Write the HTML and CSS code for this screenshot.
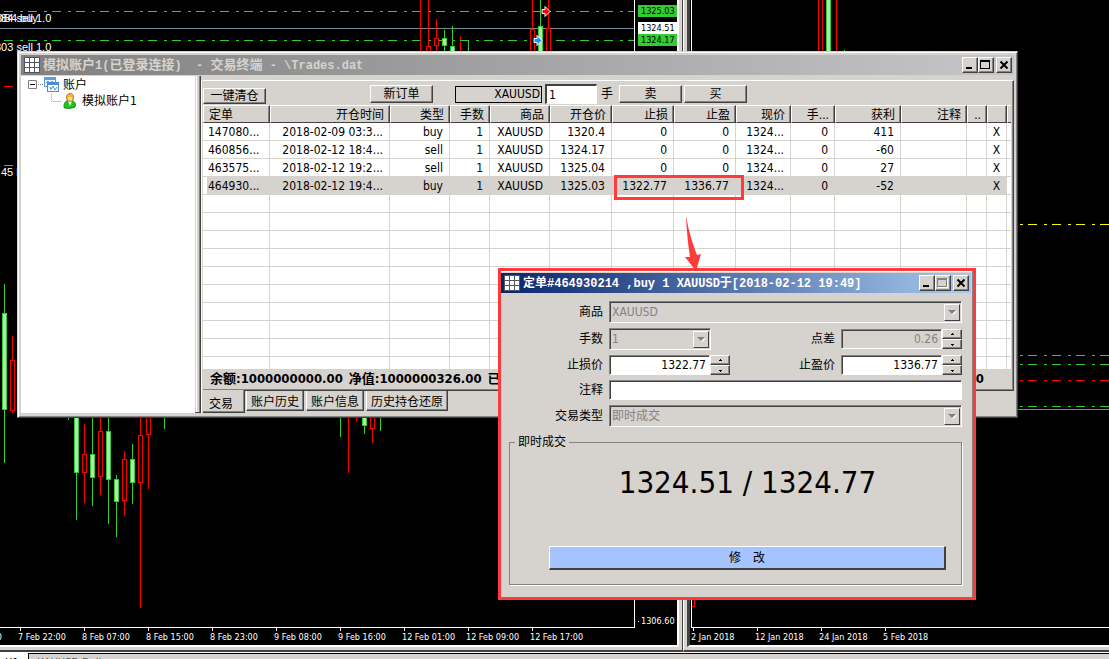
FILE: index.html
```html
<!DOCTYPE html>
<html lang="zh-CN">
<head>
<meta charset="utf-8">
<title>交易终端 - \Trades.dat</title>
<link rel="stylesheet" href="styles.css">
</head>
<body>
<main class="workspace">
  <section class="pane pane-main" aria-label="XAUUSD,H1">
    <div class="pane-inner">
      <div class="plot-row">
        <svg class="plot" aria-hidden="true">
          <g class="levels">
            <path class="level buy" d="M4 11.5H3000M4 40.5H3000"/>
            <path class="level buy" d="M4 165.5h9"/>
            <path class="level stop" d="M4 86.5h9"/>
            <path class="bid" d="M0 28.5H3000"/>
          </g>
          <path class="wick down" d="M420.5 0V55M428.5 0V46M436.5 19V38M436.5 46V55M460.5 36V55M532.5 0V29M548.5 0V28M12.5 336V360M12.5 411V413M84.5 424V454M84.5 472V503M100.5 410V431M100.5 476V495M124.5 451V459M124.5 500V516M140.5 410V435M140.5 482V608M148.5 434V489M348.5 410V473M356.5 410V421M372.5 428V443"/>
          <path class="wick up" d="M444.5 30V52M452.5 26V46M460 40.5H468.5V55M540.5 0V26M4.5 284V463M68.5 410V420M76.5 472V520M92.5 410V506M108.5 410V524M116.5 475V537M132.5 444V504M164.5 410V429M340.5 410V437M364.5 425V434M380.5 410V431"/>
          <path class="body down" d="M426.5 46.5h4v12h-4zM434.5 38.5h4v7h-4zM530.5 29.5h4v26h-4zM546.5 28.5h4v26h-4zM10.5 360.5h4v50h-4zM82.5 454.5h4v18h-4zM98.5 431.5h4v45h-4zM122.5 459.5h4v41h-4zM138.5 435.5h4v47h-4zM146.5 400.5h4v34h-4zM370.5 400.5h4v28h-4z"/>
          <path class="body up" d="M442.5 38.5h4v7h-4zM450.5 46.5h4v12h-4zM538.5 26.5h4v26h-4zM2.5 313.5h4v96h-4zM74.5 400.5h4v72h-4zM90.5 454.5h4v23h-4zM106.5 431.5h4v48h-4zM114.5 479.5h4v22h-4zM130.5 459.5h4v23h-4zM362.5 400.5h4v25h-4z"/>
          <path class="mark mark-sell" d="M542 9.500h3v-3l5 5-5 5v-3h-3z"/>
          <path class="mark mark-buy" d="M534 38.500h3v-3l5 5-5 5v-3h-3z"/>
          <g class="trade-labels">
            <text x="-5" y="22">084 sell 1.0</text>
            <text x="-5" y="22">OB4 buy</text>
            <text x="-5" y="51">303 sell 1.0</text>
            <text x="1" y="176">45 buy 1.0</text>
          </g>
        </svg>
        <div class="price-axis">
          <span class="tag tag-buy">1325.03</span>
          <span class="tag tag-bid">1324.51</span>
          <span class="tag tag-buy tag-next">1324.17</span>
          <span class="price-tick">1306.60</span>
        </div>
      </div>
      <div class="time-axis time-main">
        <span>7 Feb 14:00</span><span>7 Feb 22:00</span><span>8 Feb 07:00</span><span>8 Feb 15:00</span><span>8 Feb 23:00</span><span>9 Feb 08:00</span><span>9 Feb 16:00</span><span>12 Feb 01:00</span><span>12 Feb 09:00</span><span>12 Feb 17:00</span>
      </div>
    </div>
  </section>
  <section class="pane pane-side" aria-label="XAUUSD,Daily">
    <div class="pane-inner">
      <div class="plot-row">
        <svg class="plot" aria-hidden="true">
          <path class="level pending" d="M0 224.500H3000"/>
          <path class="level buy" d="M0 355.500H3000M0 364.500H3000M0 406.500H3000"/>
          <path class="level stop" d="M0 380.500H3000"/>
          <path class="bid" d="M0 409.500H3000"/>
          <path class="wick down" d="M126.500 0V55M130.500 0V55M144.500 0V55M0 606.500H2.500V590"/>
          <path class="wick up" d="M152.500 50V55"/>
          <path class="body up" d="M134.500 -5.500h4v62h-4z"/>
        </svg>
      </div>
      <div class="time-axis time-side">
        <span>2 Jan 2018</span><span>12 Jan 2018</span><span>24 Jan 2018</span><span>5 Feb 2018</span>
      </div>
    </div>
  </section>
</main>
<nav class="chart-tabs"><a class="chart-tab current" href="#h1">H1</a><a class="chart-tab" href="#daily">XAUUSD,Daily</a></nav>

<section class="window terminal" aria-label="交易终端">
  <header class="titlebar inactive">
    <svg class="app-icon" viewBox="0 0 16 16" aria-hidden="true"><path fill="#4c5866" d="M0 0h16v16H0z"/><path fill="#fff" d="M1 1h4v4H1zM6 1h4v4H6zM11 1h4v4h-4zM1 6h4v4H1zM6 6h4v4H6zM11 6h4v4h-4zM1 11h4v4H1zM6 11h4v4H6zM11 11h4v4h-4z"/></svg>
    <h1 class="title">模拟账户<span class="mono">1(</span>已登录连接<span class="mono">)  - </span>交易终端<span class="mono"> - \Trades.dat</span></h1>
    <div class="caption-buttons">
      <button class="caption" aria-label="最小化"><svg viewBox="0 0 14 14"><path d="M3 9h6v2H3z"/></svg></button>
      <button class="caption" aria-label="最大化"><svg viewBox="0 0 14 14"><path d="M1 2h10v9H1zM2 4v6h8V4z" fill-rule="evenodd"/></svg></button>
      <button class="caption close" aria-label="关闭"><svg viewBox="0 0 14 14"><path d="M3.500 3.500l7 7M10.500 3.500l-7 7"/></svg></button>
    </div>
  </header>
  <div class="terminal-body">
    <ul class="tree">
      <li class="tree-row">
        <svg class="expander" viewBox="0 0 15 9" aria-hidden="true"><path fill="none" stroke="#808080" d="M.5.5h8v8h-8z"/><path stroke="#000" d="M2 4.500h5"/><path stroke="#808080" stroke-dasharray="1 1" d="M10 4.500h5"/></svg>
        <svg class="tree-icon" viewBox="0 0 16 16" aria-hidden="true"><path fill="#5b9fe0" d="M1 0h12v10H1z"/><path fill="#e4f1ff" d="M2 3h10v6H2z"/><path fill="none" stroke="#5b9fe0" d="M3 6l2-2 2 3 2-3 2 2"/><path fill="#4a90d9" d="M4 5h12v10H4z"/><path fill="#fff" d="M5 8h10v6H5z"/><path fill="none" stroke="#4a90d9" d="M7 10l1 2.500L10 9l2 4 2-3"/></svg>
        <span>账户</span>
      </li>
      <li class="tree-row child">
        <svg class="branch" viewBox="0 0 12 16" aria-hidden="true"><path fill="none" stroke="#808080" stroke-dasharray="1 1" d="M.5 0V8.500H12"/></svg>
        <svg class="tree-icon" viewBox="0 0 16 16" aria-hidden="true"><path fill="#1fc41f" stroke="#128a12" d="M2.500 15C1 12 3 8 6 7.500h3C13 8 14 11 13 14c-3 1.500-8 1.500-10.500 1z"/><path fill="#fff" d="M6 8h4l-2 5z"/><path fill="#f0b63a" stroke="#b8801c" d="M8 .5c5 0 4.500 8 0 8s-5-8 0-8z"/><path fill="#ffdf8c" d="M6 4h4v2c0 2-4 2-4 0z"/></svg>
        <span>模拟账户1</span>
      </li>
    </ul>
    <div class="splitter"></div>
    <div class="trade-panel">
      <div class="sheet">
        <div class="toolbar">
          <button class="btn close-all">一键清仓</button>
          <button class="btn new-order">新订单</button>
          <input class="symbol" aria-label="商品" value="XAUUSD" readonly>
          <input class="lots" id="lots" value="1">
          <label for="lots">手</label>
          <button class="btn sell">卖</button>
          <button class="btn">买</button>
        </div>
        <table class="orders">
          <colgroup><col class="c67"><col class="c120"><col class="c60"><col class="c40"><col class="c60"><col class="c62"><col class="c62"><col class="c62"><col class="c55"><col class="c44"><col class="c66"><col class="c66"><col class="c20"><col class="c20"><col></colgroup>
          <thead><tr><th class="first">定单</th><th>开仓时间</th><th>类型</th><th>手数</th><th>商品</th><th>开仓价</th><th>止损</th><th>止盈</th><th>现价</th><th>手...</th><th>获利</th><th>注释</th><th>..</th><th></th><th></th></tr></thead>
          <tbody>
            <tr><td>147080...</td><td>2018-02-09 03:3...</td><td>buy</td><td>1</td><td>XAUUSD</td><td>1320.4</td><td>0</td><td>0</td><td>1324...</td><td>0</td><td>411</td><td></td><td></td><td>X</td><td></td></tr>
            <tr><td>460856...</td><td>2018-02-12 18:4...</td><td>sell</td><td>1</td><td>XAUUSD</td><td>1324.17</td><td>0</td><td>0</td><td>1324...</td><td>0</td><td>-60</td><td></td><td></td><td>X</td><td></td></tr>
            <tr><td>463575...</td><td>2018-02-12 19:2...</td><td>sell</td><td>1</td><td>XAUUSD</td><td>1325.04</td><td>0</td><td>0</td><td>1324...</td><td>0</td><td>27</td><td></td><td></td><td>X</td><td></td></tr>
            <tr class="selected"><td>464930...</td><td>2018-02-12 19:4...</td><td>buy</td><td>1</td><td>XAUUSD</td><td>1325.03</td><td>1322.77</td><td>1336.77</td><td>1324...</td><td>0</td><td>-52</td><td></td><td></td><td>X</td><td></td></tr>
            <tr><td></td><td></td><td></td><td></td><td></td><td></td><td></td><td></td><td></td><td></td><td></td><td></td><td></td><td></td><td></td></tr>
            <tr><td></td><td></td><td></td><td></td><td></td><td></td><td></td><td></td><td></td><td></td><td></td><td></td><td></td><td></td><td></td></tr>
            <tr><td></td><td></td><td></td><td></td><td></td><td></td><td></td><td></td><td></td><td></td><td></td><td></td><td></td><td></td><td></td></tr>
            <tr><td></td><td></td><td></td><td></td><td></td><td></td><td></td><td></td><td></td><td></td><td></td><td></td><td></td><td></td><td></td></tr>
            <tr><td></td><td></td><td></td><td></td><td></td><td></td><td></td><td></td><td></td><td></td><td></td><td></td><td></td><td></td><td></td></tr>
            <tr><td></td><td></td><td></td><td></td><td></td><td></td><td></td><td></td><td></td><td></td><td></td><td></td><td></td><td></td><td></td></tr>
            <tr><td></td><td></td><td></td><td></td><td></td><td></td><td></td><td></td><td></td><td></td><td></td><td></td><td></td><td></td><td></td></tr>
            <tr><td></td><td></td><td></td><td></td><td></td><td></td><td></td><td></td><td></td><td></td><td></td><td></td><td></td><td></td><td></td></tr>
            <tr><td></td><td></td><td></td><td></td><td></td><td></td><td></td><td></td><td></td><td></td><td></td><td></td><td></td><td></td><td></td></tr>
            <tr class="partial"><td></td><td></td><td></td><td></td><td></td><td></td><td></td><td></td><td></td><td></td><td></td><td></td><td></td><td></td><td></td></tr>
          </tbody>
        </table>
        <div class="summary"><span>余额:1000000000.00</span><span>净值:1000000326.00</span><span>已用预付款:5300.00</span><span class="profit">盈亏:326.00</span></div>
      </div>
      <div class="tabs" role="tablist">
        <button class="tab current-tab" role="tab" aria-selected="true">交易</button>
        <button class="tab" role="tab">账户历史</button>
        <button class="tab" role="tab">账户信息</button>
        <button class="tab" role="tab">历史持仓还原</button>
      </div>
    </div>
  </div>
</section>

<div class="highlight"></div>

<section class="dialog" role="dialog" aria-label="定单#464930214">
  <header class="titlebar active">
    <svg class="app-icon" viewBox="0 0 16 16" aria-hidden="true"><path fill="#4c5866" d="M0 0h16v16H0z"/><path fill="#fff" d="M1 1h4v4H1zM6 1h4v4H6zM11 1h4v4h-4zM1 6h4v4H1zM6 6h4v4H6zM11 6h4v4h-4zM1 11h4v4H1zM6 11h4v4H6zM11 11h4v4h-4z"/></svg>
    <h2 class="title">定单<span class="mono">#464930214 ,buy 1 XAUUSD</span>于<span class="mono">[2018-02-12 19:49]</span></h2>
    <div class="caption-buttons">
      <button class="caption" aria-label="最小化"><svg viewBox="0 0 14 14"><path d="M3 9h6v2H3z"/></svg></button>
      <button class="caption" aria-label="最大化" disabled><svg viewBox="0 0 14 14"><path fill="#fff" d="M2 3h10v9H2z"/><path fill="#808080" d="M1 2h10v9H1z"/><path fill="#d6d3ce" d="M2 4h8v6H2z"/></svg></button>
      <button class="caption close" aria-label="关闭"><svg viewBox="0 0 14 14"><path d="M3.500 3.500l7 7M10.500 3.500l-7 7"/></svg></button>
    </div>
  </header>
  <form class="order-form">
    <div class="row">
      <label for="f-symbol">商品</label>
      <span class="combo wide"><select id="f-symbol" disabled><option>XAUUSD</option></select><svg class="drop" viewBox="0 0 14 15" aria-hidden="true"><path fill="#fff" d="M4 6h8l-4 4z"/><path fill="#808080" d="M3 5h8l-4 4z"/></svg></span>
    </div>
    <div class="row">
      <label for="f-lots">手数</label>
      <span class="combo short"><select id="f-lots" disabled><option>1</option></select><svg class="drop" viewBox="0 0 14 15" aria-hidden="true"><path fill="#fff" d="M4 6h8l-4 4z"/><path fill="#808080" d="M3 5h8l-4 4z"/></svg></span>
      <label class="second" for="f-spread">点差</label>
      <input class="num" id="f-spread" value="0.26" disabled>
      <span class="spin"><button type="button" aria-label="增加点差"><svg viewBox="0 0 5 3"><path d="M2 0h1v1h1v1H1V1h1z"/></svg></button><button type="button" aria-label="减少点差"><svg viewBox="0 0 5 3"><path d="M1 1h3v1H3v1H2V2H1z"/></svg></button></span>
    </div>
    <div class="row">
      <label for="f-sl">止损价</label>
      <input class="num" id="f-sl" value="1322.77">
      <span class="spin"><button type="button" aria-label="增加止损价"><svg viewBox="0 0 5 3"><path d="M2 0h1v1h1v1H1V1h1z"/></svg></button><button type="button" aria-label="减少止损价"><svg viewBox="0 0 5 3"><path d="M1 1h3v1H3v1H2V2H1z"/></svg></button></span>
      <label class="second" for="f-tp">止盈价</label>
      <input class="num" id="f-tp" value="1336.77">
      <span class="spin"><button type="button" aria-label="增加止盈价"><svg viewBox="0 0 5 3"><path d="M2 0h1v1h1v1H1V1h1z"/></svg></button><button type="button" aria-label="减少止盈价"><svg viewBox="0 0 5 3"><path d="M1 1h3v1H3v1H2V2H1z"/></svg></button></span>
    </div>
    <div class="row">
      <label for="f-note">注释</label>
      <input class="wide" id="f-note">
    </div>
    <div class="row">
      <label for="f-type">交易类型</label>
      <span class="combo wide"><select id="f-type" disabled><option>即时成交</option></select><svg class="drop" viewBox="0 0 14 15" aria-hidden="true"><path fill="#fff" d="M4 6h8l-4 4z"/><path fill="#808080" d="M3 5h8l-4 4z"/></svg></span>
    </div>
    <fieldset class="instant">
      <legend>即时成交</legend>
      <output class="quote">1324.51 / 1324.77</output>
      <button class="modify" type="button">修　改</button>
    </fieldset>
  </form>
</section>
<svg class="pointer" viewBox="0 0 18 56" aria-hidden="true"><path fill="#ff3b3b" d="M2 0Q6 22 13 39L17 38 12 55 1 41 6 41Q3 22 2 0z"/></svg>
</body>
</html>
```
FILE: styles.css
```css
:root {
  --face: #d6d3ce;
  --shade: #848284;
  --dark: #424142;
  --lime: #32cd32;
  --red: #ff3b3b;
  --ui: "DejaVu Sans Condensed", "DejaVu Sans", "Noto Sans CJK SC", sans-serif;
}

* { box-sizing: border-box; }

body {
  margin: 0;
  height: 100vh;
  display: flex;
  flex-direction: column;
  overflow: hidden;
  position: relative;
  background: #000;
  color: #000;
  font: 12px/16px var(--ui);
}

button, input, select { font: inherit; color: inherit; border-radius: 0; margin: 0; }
button { padding: 0; }

/* charts */
.workspace { flex: 1; min-height: 0; display: flex; }
.pane {
  min-width: 0;
  display: flex;
  background: var(--face);
  border-bottom: 2px solid var(--dark);
  padding-bottom: 3px;
}
.pane-main { flex: 684 1 0; padding-right: 3px; border-right: 1px solid var(--dark); }
.pane-side { flex: 425 1 0; padding-left: 3px; border-left: 1px solid #fff; }
.pane-inner {
  flex: 1;
  min-width: 0;
  display: flex;
  flex-direction: column;
  background: #000;
  color: #fff;
  border-bottom: 2px solid #fff;
}
.pane-main .pane-inner { border-right: 2px solid #fff; }
.pane-side .pane-inner { border-left: 3px solid var(--dark); padding-left: 1px; }
.plot-row { flex: 1; min-height: 0; display: flex; border-bottom: 1px solid #fff; }
.pane-side .plot-row { border-left: 1px solid #fff; }
.plot { flex: 1; min-width: 0; width: 100%; height: 100%; display: block; shape-rendering: crispEdges; }
.pane-main .plot-row { margin-right: 42px; position: relative; border-right: 1px solid #fff; }
.price-axis {
  position: absolute;
  left: 100%;
  top: 0;
  bottom: 0;
  width: 43px;
  padding-left: 4px;
  padding-top: 5px;
  display: flex;
  flex-direction: column;
  font-size: 9px;
  line-height: 12px;
}
.tag { width: 39px; padding-left: 3px; margin-bottom: 5px; color: #000; }
.tag-buy { background: var(--lime); }
.tag-bid { background: #fff; margin-bottom: 0; }
.price-tick { margin-top: auto; padding-left: 3px; background: linear-gradient(#fff, #fff) 0 6px / 1px 1px no-repeat; }
.level { fill: none; stroke-dasharray: 9 7 3 5; }
.buy { stroke: var(--lime); }
.stop { stroke: #f00; }
.pending { stroke: #ff0; }
.bid { stroke: #778899; }
.wick { fill: none; }
.down { stroke: #f00; }
.up { stroke: var(--lime); }
.body.down { fill: #000; }
.body.up { fill: #b5e3b5; }
.mark { stroke: #fff; shape-rendering: auto; }
.mark-sell { fill: #f00; }
.mark-buy { fill: #1e90ff; }
.trade-labels { fill: #fff; font: 11px "Liberation Sans", sans-serif; }
.time-axis { display: flex; height: 17px; overflow: hidden; font-size: 9px; line-height: 12px; white-space: nowrap; }
.time-axis span { flex: 0 0 64px; padding-top: 3px; background: linear-gradient(#fff, #fff) 2px 0 / 1px 3px no-repeat; }
.time-main span:first-child { margin-left: -46px; }
.chart-tabs { height: 7px; flex: none; display: flex; overflow: hidden; background: var(--face); border-top: 1px solid #fff; }
.chart-tab { flex: 1; padding: 2px 0 0 8px; color: #555; text-decoration: none; font-size: 11px; line-height: 14px; border-top: 1px solid #000; border-left: 1px solid #000; }
.chart-tab.current { flex: 0 0 28px; padding-left: 4px; background: #fff; color: #000; border-color: #fff; }

/* windows */
.window {
  position: absolute;
  background: var(--face);
  border: 1px solid var(--face);
  border-right-color: var(--dark);
  border-bottom-color: var(--dark);
  box-shadow: inset 1px 1px #fff, inset -1px -1px var(--shade);
  padding: 3px;
}
.terminal { left: 17px; right: 91px; top: 51px; }
.titlebar { display: flex; align-items: center; height: 20px; padding: 0 2px 0 3px; gap: 3px; }
.titlebar.inactive { background: linear-gradient(90deg, #808080, #c6c5c9); color: var(--face); }
.titlebar.active { background: linear-gradient(90deg, #0a246a, #a6caf0); color: #fff; }
.app-icon { width: 16px; height: 16px; flex: none; }
.title { flex: 1; min-width: 0; margin: 0; font: bold 13px/20px "Noto Sans CJK SC", sans-serif; white-space: pre; overflow: hidden; }
.active .title { font-size: 12px; }
.mono { font: bold 12px/20px "Liberation Mono", monospace; }
.caption-buttons { display: flex; }
.caption, .btn, .spin button {
  background: var(--face);
  border: 1px solid #fff;
  border-right-color: var(--dark);
  border-bottom-color: var(--dark);
  box-shadow: inset -1px -1px var(--shade);
}
.caption { width: 16px; height: 16px; }
.caption svg { display: block; width: 14px; height: 14px; shape-rendering: crispEdges; }
.caption.close { margin-left: 2px; }
.caption.close svg { stroke: #000; stroke-width: 2; shape-rendering: auto; }

.terminal-body { display: flex; padding: 1px 0; }
.tree { width: 174px; margin: 0; padding: 0 0 0 7px; background: #fff; list-style: none; }
.tree-row { display: flex; align-items: center; height: 17px; }
.expander { width: 15px; height: 9px; }
.tree-icon { width: 16px; height: 16px; margin-right: 4px; }
.child { height: 16px; padding-left: 23px; }
.branch { width: 11px; height: 16px; }
.splitter { width: 6px; border: solid; border-width: 0 1px 1px 0; border-color: var(--dark); background: linear-gradient(90deg, var(--face) 1px, #fff 1px 2px, var(--face) 2px 4px, var(--shade) 4px); }
.trade-panel { flex: 1; min-width: 0; margin-top: 4px; border-left: 1px solid #fff; padding-left: 1px; }
.sheet { border-top: 1px solid #fff; border-right: 1px solid var(--dark); border-bottom: 1px solid var(--dark); box-shadow: inset -1px -1px var(--shade); padding-right: 2px; }
.toolbar { display: flex; align-items: center; height: 24px; padding-top: 2px; }
.btn { width: 63px; height: 18px; line-height: 16px; }
.close-all { height: 16px; line-height: 14px; align-self: flex-end; margin: 0 104px 1px 0; }
.symbol { width: 87px; height: 17px; margin: 0 3px 0 22px; padding: 0 1px; border: 1px solid #000; background: var(--face); text-align: right; }
.lots { width: 52px; height: 20px; margin-right: 4px; padding: 0 2px; border: 1px solid #fff; border-top: 2px solid var(--dark); border-left: 2px solid var(--dark); background: #fff; }
.sell { margin: 0 2px 0 6px; }

.orders { width: 100%; table-layout: fixed; border-collapse: separate; border-spacing: 0; }
.c67 { width: 67px; } .c120 { width: 120px; } .c60 { width: 60px; } .c40 { width: 40px; } .c62 { width: 62px; }
.c55 { width: 55px; } .c44 { width: 44px; } .c66 { width: 66px; } .c20 { width: 20px; }
.orders th, .orders td { height: 18px; padding: 0 6px 0 0; text-align: right; line-height: 16px; white-space: nowrap; overflow: hidden; }
.orders th { font-weight: normal; line-height: 14px; border: 1px solid #fff; border-right-color: var(--dark); border-bottom-color: var(--dark); box-shadow: inset -1px 0 var(--shade); padding: 2px 5px 0 0; }
.orders th:last-child { padding: 0; border-right: 0; box-shadow: none; }
.orders td { background: #fff; border-right: 1px solid var(--face); border-bottom: 1px solid var(--face); }
.orders th.first, .orders td:first-child { text-align: left; padding-left: 5px; }
.orders td:first-child, .orders td:nth-child(14) { padding-right: 0; }
.orders td:nth-child(14) { text-align: center; }
.orders td:last-child { padding: 0; border-right: 0; }
.selected td { background: var(--face); }
.selected td:first-child { background: linear-gradient(90deg, #fff 4px, var(--face) 4px); }
.selected td:last-child { background: #fff; }
.orders .partial td { height: 12px; border-bottom: 0; }
.summary { display: flex; gap: 6px; height: 21px; padding: 0 27px 0 7px; font-size: 13px; font-weight: bold; line-height: 20px; white-space: nowrap; overflow: hidden; }
.profit { margin-left: auto; }
.tabs { display: flex; align-items: flex-start; gap: 2px; height: 22px; }
.tab { height: 20px; padding: 2px 4px 0; background: var(--face); border: 1px solid #fff; border-top: 0; border-right-color: var(--dark); border-bottom-color: var(--dark); box-shadow: inset -1px -1px var(--shade); line-height: 16px; }
.current-tab { height: 23px; margin: -1px -1px 0 0; padding: 5px 11px 0 6px; border-left: 0; }

.highlight { position: absolute; left: 614px; top: 175px; width: 130px; height: 25px; border: 3px solid var(--red); }
.pointer { position: absolute; left: 684px; top: 216px; width: 18px; height: 56px; }

/* order dialog */
.dialog { position: absolute; left: 498px; top: 268px; width: 478px; border: 3px solid var(--red); background: var(--face); padding: 2px 2px 0 0; box-shadow: inset -1px 0 var(--shade), inset 0 1px #fff; }
.order-form { padding: 8px 9px 12px 8px; display: flex; flex-direction: column; gap: 5px; }
.row { display: flex; align-items: center; }
.row > label { flex: none; width: 94px; margin-right: 6px; text-align: right; }
.row > label.second { flex: 1; width: auto; }
.row > .wide { flex: 1; }
.row input, .combo select { height: 20px; padding: 0 3px; background: #fff; border: 1px solid #fff; border-top-color: var(--shade); border-left-color: var(--shade); box-shadow: inset 1px 1px var(--dark); }
.num { width: 101px; text-align: right; }
.row input:disabled, .combo select { background: var(--face); color: var(--shade); }
.combo { position: relative; display: flex; }
.short { width: 102px; }
.combo select { width: 100%; height: 22px; padding: 0 2px; appearance: none; opacity: 1; }
.drop { position: absolute; right: 2px; top: 3px; width: 16px; height: 17px; border: 1px solid #fff; border-right-color: var(--dark); border-bottom-color: var(--dark); }
.spin { width: 20px; height: 20px; display: flex; flex-direction: column; }
.spin button { flex: 1; display: flex; align-items: center; justify-content: center; min-height: 0; }
.spin svg { width: 5px; height: 3px; shape-rendering: crispEdges; }
.instant { margin: 2px 0 0; padding: 12px 15px 14px 39px; border: 1px solid var(--shade); box-shadow: 1px 1px #fff; display: flex; flex-direction: column; }
.instant legend { margin-left: -34px; padding: 0 3px; }
.quote { height: 84px; text-align: center; font-size: 31px; line-height: 40px; }
.modify { height: 24px; border: 1px solid #fff; border-right: 2px solid var(--dark); border-bottom: 2px solid var(--dark); background: #a5c3ff; }
```
